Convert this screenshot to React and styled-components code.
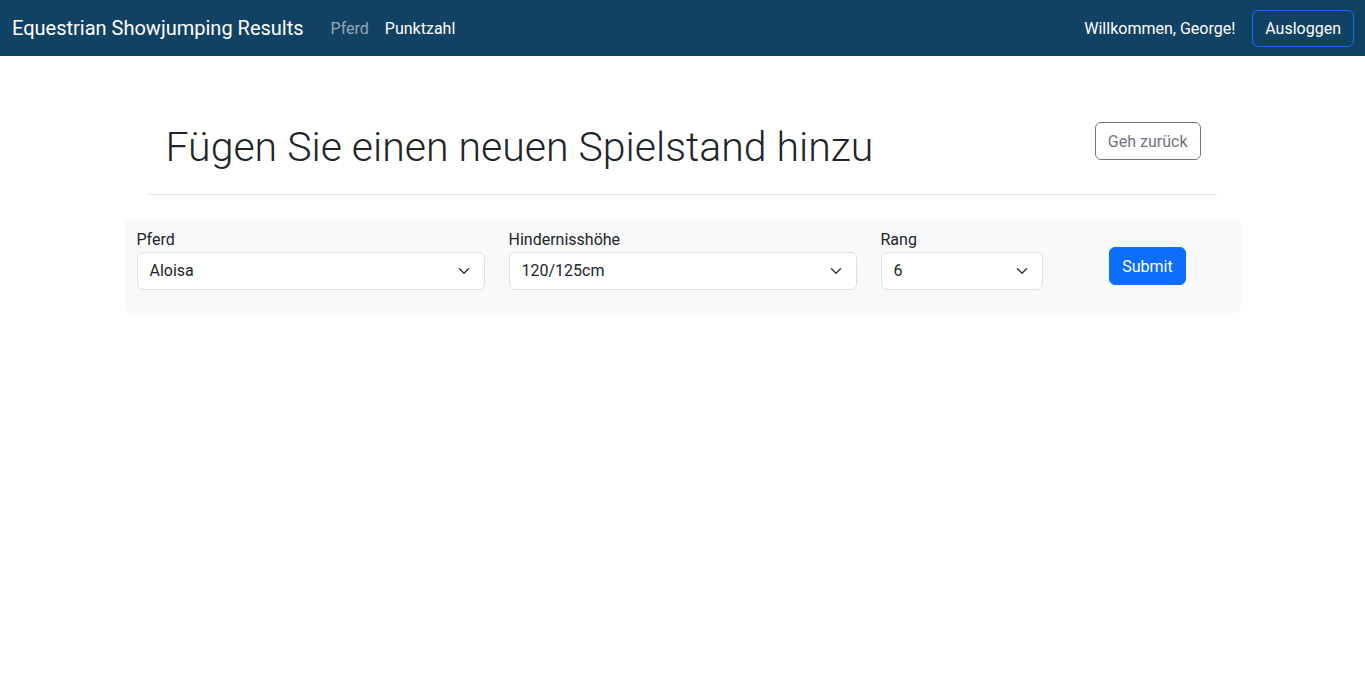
import React from 'react';
import styled, { createGlobalStyle } from 'styled-components';

const GlobalStyle = createGlobalStyle`
    body {
        margin: 0;
        font-family: Roboto, "Liberation Sans", sans-serif;
        font-size: 16px;
        color: #212529;
        background: #fff;
    }
`;

const Chevron = () => (
    <svg width="16" height="12" viewBox="0 0 16 16" fill="none">
        <path d="m2 5 6 6 6-6" stroke="#343a40" strokeWidth="2" strokeLinecap="round" strokeLinejoin="round" />
    </svg>
);

const Select = ({ value }) => (
    <SelectBox>
        <span>{value}</span>
        <Chevron />
    </SelectBox>
);

export default function App() {
    return (
        <>
            <GlobalStyle />
            <Navbar>
                <NavLeft>
                    <Brand>Equestrian Showjumping Results</Brand>
                    <NavLink>Pferd</NavLink>
                    <NavLink $active>Punktzahl</NavLink>
                </NavLeft>
                <NavRight>
                    <Welcome>Willkommen, George!</Welcome>
                    <LogoutButton>Ausloggen</LogoutButton>
                </NavRight>
            </Navbar>

            <Container>
                <HeaderRow>
                    <Title>Fügen Sie einen neuen Spielstand hinzu</Title>
                    <BackButton>Geh zurück</BackButton>
                </HeaderRow>
                <Divider />

                {/* Formular */}
                <FormPanel>
                    <Field $span={4}>
                        <Label>Pferd</Label>
                        <Select value="Aloisa" />
                    </Field>
                    <Field $span={4}>
                        <Label>Hindernisshöhe</Label>
                        <Select value="120/125cm" />
                    </Field>
                    <Field $span={2}>
                        <Label>Rang</Label>
                        <Select value="6" />
                    </Field>
                    <SubmitCell>
                        <SubmitButton>Submit</SubmitButton>
                    </SubmitCell>
                </FormPanel>
            </Container>
        </>
    );
}

const Navbar = styled.nav`
    height: 56px;
    background: #124263;
    display: flex;
    align-items: center;
    justify-content: space-between;
    padding: 0 11px 0 12px;
    box-sizing: border-box;
`;

const NavLeft = styled.div`
    display: flex;
    align-items: center;
`;

const Brand = styled.span`
    font-size: 20px;
    color: #fff;
    margin-right: 19px;
`;

const NavLink = styled.span`
    font-size: 16px;
    color: ${({ $active }) => ($active ? '#fff' : 'rgba(255, 255, 255, 0.55)')};
    padding: 0 8px;
`;

const NavRight = styled.div`
    display: flex;
    align-items: center;
    gap: 17px;
`;

const Welcome = styled.span`
    color: #fff;
    font-size: 16px;
`;

const LogoutButton = styled.button`
    font-family: inherit;
    font-size: 16px;
    color: #fff;
    background: transparent;
    border: 1px solid #0d6efd;
    border-radius: 6px;
    height: 37px;
    padding: 0 12px;
`;

const Container = styled.div`
    width: 1116px;
    margin: 0 auto;
    padding-top: 69px;
`;

const HeaderRow = styled.div`
    display: flex;
    align-items: center;
    justify-content: space-between;
    margin: 0 24px;
    padding: 0 16px 0 17px;
`;

const Title = styled.h1`
    margin: -2px 0 2px;
    font-size: 41px;
    font-weight: 300;
    line-height: 48px;
`;

const BackButton = styled.button`
    font-family: inherit;
    font-size: 16px;
    color: #6c757d;
    background: #fff;
    border: 1px solid #6c757d;
    border-radius: 6px;
    height: 38px;
    padding: 0 12px;
    align-self: flex-start;
    margin-top: -3px;
`;

const Divider = styled.hr`
    margin: 21px 24px 24px;
    border: 0;
    border-top: 1px solid #dee2e6;
`;

const FormPanel = styled.div`
    background: #f8f9fa;
    border-radius: 6px;
    padding: 12px 12px 23px;
    display: grid;
    grid-template-columns: repeat(12, 1fr);
    column-gap: 24px;
    align-items: end;
`;

const Field = styled.div`
    grid-column: span ${({ $span }) => $span};
    display: flex;
    flex-direction: column;
`;

const Label = styled.label`
    font-size: 16px;
    line-height: 17px;
    margin-bottom: 4px;
`;

const SelectBox = styled.div`
    height: 38px;
    box-sizing: border-box;
    background: #fff;
    border: 1px solid #dee2e6;
    border-radius: 6px;
    padding: 0 12px 2px;
    display: flex;
    align-items: center;
    justify-content: space-between;
    font-size: 16px;

    svg {
        margin-top: 2px;
    }
`;

const SubmitCell = styled.div`
    grid-column: span 2;
    display: flex;
    justify-content: center;
    padding-bottom: 5px;
`;

const SubmitButton = styled.button`
    font-family: inherit;
    font-size: 16px;
    color: #fff;
    background: #0d6efd;
    border: 1px solid #0d6efd;
    border-radius: 6px;
    height: 38px;
    padding: 0 12px;
`;
